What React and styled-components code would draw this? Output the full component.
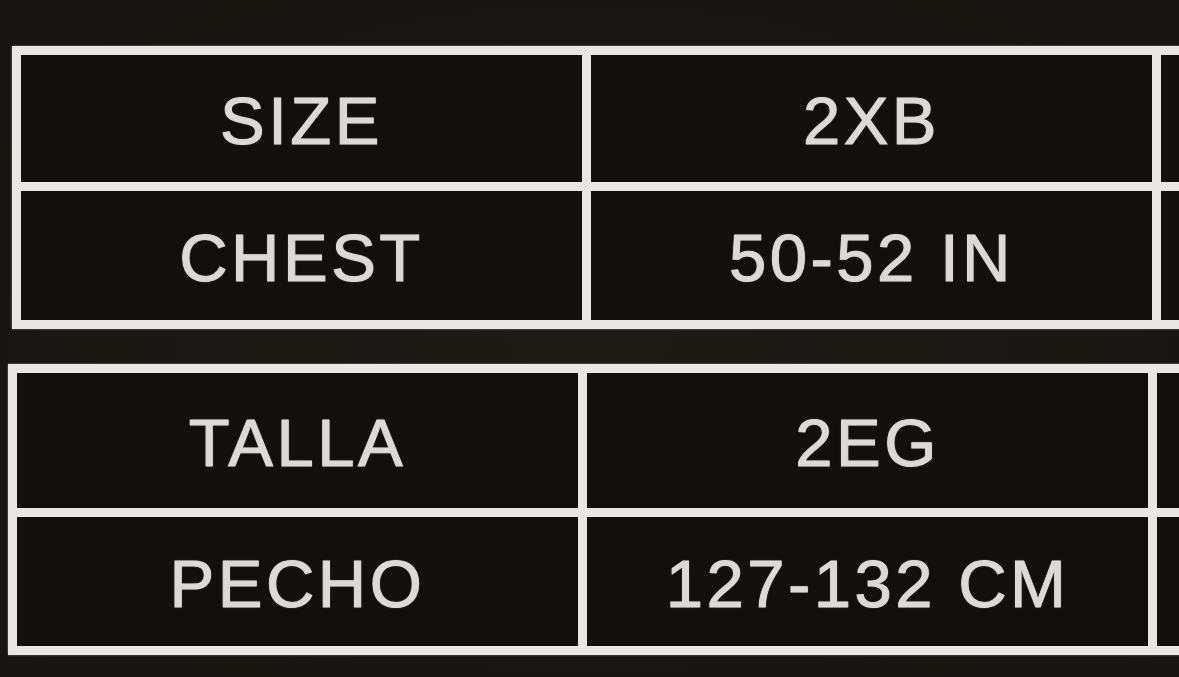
import React from "react";
import styled, { createGlobalStyle } from "styled-components";

const Global = createGlobalStyle`
  html, body {
    margin: 0;
    padding: 0;
    background: #1b1713;
    overflow: hidden;
    width: 1179px;
    height: 677px;
  }
`;

const Page = styled.div`
  width: 1179px;
  height: 677px;
  overflow: hidden;
  background: radial-gradient(ellipse at 50% 50%, #1d1915 0%, #181411 100%);
  display: flex;
  flex-direction: column;
  gap: 35px;
  padding: 46px 0 0 12px;
  box-sizing: border-box;
`;

const Table = styled.div`
  display: grid;
  grid-template-columns: 561px 561px 561px;
  grid-template-rows: ${(p) => p.$rows};
  gap: 9px;
  padding: 9px;
  background: #e9e7e3;
  width: max-content;
  margin-left: ${(p) => p.$shift || 0}px;
  box-shadow: 0 0 2px rgba(233, 231, 227, 0.5);
`;

const Cell = styled.div`
  background: #120f0d;
  display: flex;
  align-items: center;
  justify-content: center;
  color: #dcdad6;
  font-family: "Liberation Sans", Arial, sans-serif;
  font-size: 67px;
  letter-spacing: 3.5px;
  line-height: 1;
  padding-top: 4px;
  box-sizing: border-box;
  -webkit-text-stroke: 1px #dcdad6;
  text-shadow: 0 0 2px rgba(222, 220, 216, 0.5);
`;

const tables = [
  { rows: "127px 129px", shift: 0, cells: [["SIZE", "2XB", ""], ["CHEST", "50-52 IN", ""]] },
  { rows: "135px 129px", shift: -4, cells: [["TALLA", "2EG", ""], ["PECHO", "127-132 CM", ""]] },
];

export default function App() {
  return (
    <>
      <Global />
      <Page>
        {tables.map((t, i) => (
          <Table key={i} $rows={t.rows} $shift={t.shift}>
            {t.cells.flat().map((c, j) => (
              <Cell key={j}>{c}</Cell>
            ))}
          </Table>
        ))}
      </Page>
    </>
  );
}
